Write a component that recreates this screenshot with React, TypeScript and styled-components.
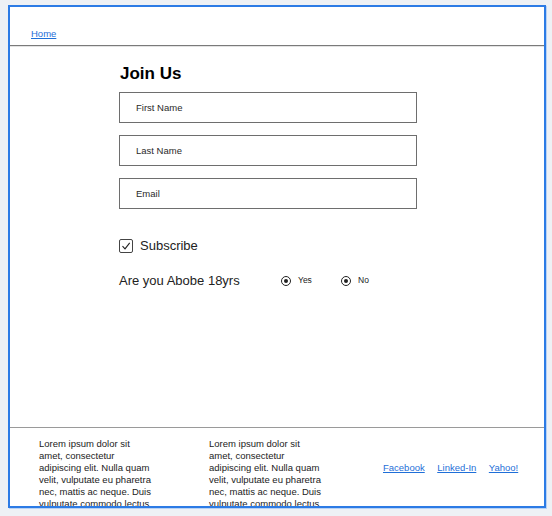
import styled, { createGlobalStyle } from "styled-components";

const GlobalStyle = createGlobalStyle`
    html, body {
        margin: 0;
        padding: 0;
        background: #eef1f5;
        font-family: "Liberation Sans", Arial, sans-serif;
    }
`;

const Page = styled.div`
    padding: 5px 0 0 8px;
    box-sizing: border-box;
    height: 516px;
`;
const Frame = styled.div`
    box-sizing: border-box;
    width: 538px;
    height: 503px;
    border: 2px solid #2c7be5;
    box-shadow: 1px 1px 0 #b8d2f5;
    background: #fff;
    display: flex;
    flex-direction: column;
    overflow: hidden;
`;
const Header = styled.header`
    padding: 21px 0 6px 21px;
    font-size: 9.5px;
    line-height: 11px;
    border-bottom: 1px solid #7a7a7a;
    box-shadow: 0 1px 0 #e3e3e3;
`;
const Link = styled.a`
    font-size: 9.5px;
    line-height: 11px;
    color: #1f6fd8;
    text-decoration: underline;
    cursor: pointer;
`;
const Main = styled.main`
    flex: 1;
    padding: 18px 0 0 109px;
`;
const Form = styled.form`
    display: flex;
    flex-direction: column;
    width: 298px;
`;
const Title = styled.h1`
    margin: 0 0 8px 1px;
    font-size: 17px;
    font-weight: 700;
    color: #000;
`;
const Fields = styled.div`
    display: flex;
    flex-direction: column;
    gap: 12px;
`;
const Field = styled.input`
    box-sizing: border-box;
    width: 298px;
    height: 31px;
    border: 1px solid #6e6e6e;
    padding: 0 0 0 16px;
    font-family: inherit;
    font-size: 9.5px;
    outline: none;
    &::placeholder {
        color: #2a2a2a;
    }
`;
const CheckRow = styled.label`
    display: flex;
    align-items: center;
    gap: 7px;
    margin-top: 29px;
    font-size: 13px;
    line-height: 15px;
    color: #222;
`;
const Box = styled.span`
    box-sizing: border-box;
    width: 14px;
    height: 14px;
    border: 1px solid #444;
    border-radius: 2px;
    display: flex;
    align-items: center;
    justify-content: center;
    svg {
        width: 10px;
        height: 10px;
    }
`;
const AgeRow = styled.div`
    display: flex;
    align-items: center;
    margin-top: 20px;
    font-size: 13px;
    line-height: 15px;
    color: #222;
`;
const Question = styled.span`
    width: 162px;
`;
const RadioLabel = styled.label`
    display: flex;
    align-items: center;
    gap: 7px;
    font-size: 8.5px;
    color: #222;
    width: 60px;
`;
const Radio = styled.span`
    box-sizing: border-box;
    width: 10px;
    height: 10px;
    border: 1.3px solid #222;
    border-radius: 50%;
    display: flex;
    align-items: center;
    justify-content: center;
    &::after {
        content: "";
        width: 4px;
        height: 4px;
        border-radius: 50%;
        background: #222;
    }
`;
const Footer = styled.footer`
    height: 78px;
    flex-shrink: 0;
    border-top: 1px solid #9a9a9a;
    display: flex;
    align-items: center;
    padding-left: 29px;
    gap: 56px;
    overflow: hidden;
`;
const TextCol = styled.p`
    align-self: flex-start;
    margin: 0;
    padding-top: 10px;
    width: 114px;
    font-size: 9.5px;
    line-height: 12px;
    color: #222;
`;
const Links = styled.nav`
    display: flex;
    gap: 12.5px;
    margin-left: 4px;
`;

const lorem =
    "Lorem ipsum dolor sit amet, consectetur adipiscing elit. Nulla quam velit, vulputate eu pharetra nec, mattis ac neque. Duis vulputate commodo lectus, ac blandit elit tincidunt id.";

export default function App() {
    return (
        <>
            <GlobalStyle />
            <Page>
                <Frame>
                    <Header>
                        <Link>Home</Link>
                    </Header>
                    <Main>
                        <Form>
                            <Title>Join Us</Title>
                            <Fields>
                                <Field placeholder="First Name" />
                                <Field placeholder="Last Name" />
                                <Field placeholder="Email" />
                            </Fields>
                            <CheckRow>
                                <Box>
                                    <svg viewBox="0 0 10 10" fill="none" stroke="#222" strokeWidth="1.1">
                                        <path d="M1.5 5.2 L4 7.8 L8.7 1.8" />
                                    </svg>
                                </Box>
                                Subscribe
                            </CheckRow>
                            <AgeRow>
                                <Question>Are you Abobe 18yrs</Question>
                                <RadioLabel>
                                    <Radio />
                                    Yes
                                </RadioLabel>
                                <RadioLabel>
                                    <Radio />
                                    No
                                </RadioLabel>
                            </AgeRow>
                        </Form>
                    </Main>
                    <Footer>
                        <TextCol>{lorem}</TextCol>
                        <TextCol>{lorem}</TextCol>
                        <Links>
                            <Link>Facebook</Link>
                            <Link>Linked-In</Link>
                            <Link>Yahoo!</Link>
                        </Links>
                    </Footer>
                </Frame>
            </Page>
        </>
    );
}
